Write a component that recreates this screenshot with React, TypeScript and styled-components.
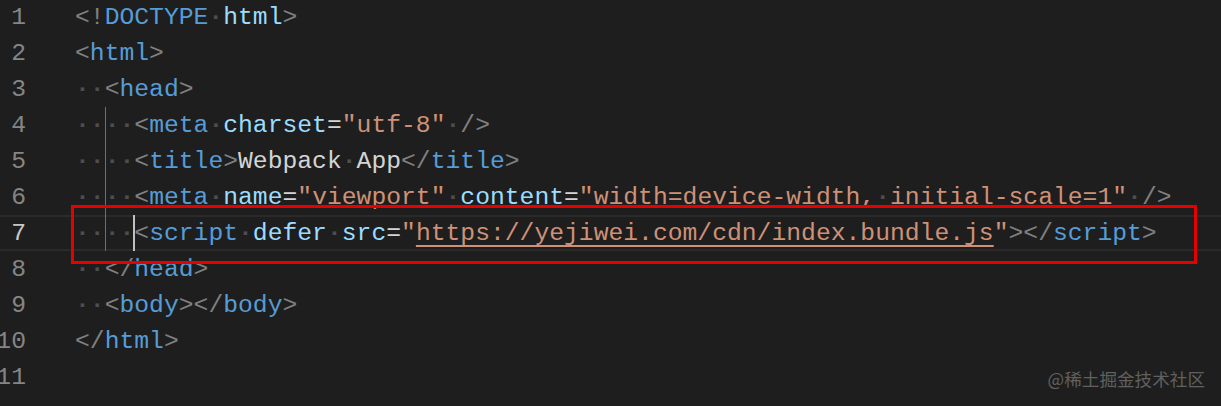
import React from "react";
import styled, { createGlobalStyle } from "styled-components";

const Global = createGlobalStyle`
  html, body { margin: 0; padding: 0; background: #1e1e1e; overflow: hidden; }
  #root { width: 1221px; height: 406px; }
`;

type Kind = "punc" | "tag" | "attr" | "str" | "text" | "link";
type Tok = [Kind, string];

const colors: Record<Kind, string> = {
  punc: "#808080",
  tag: "#569cd6",
  attr: "#9cdcfe",
  str: "#ce9178",
  text: "#d4d4d4",
  link: "#ce9178",
};

const Page = styled.div`
  position: relative;
  width: 1221px;
  height: 406px;
  background: #1e1e1e;
  overflow: hidden;
  font-family: "Liberation Mono", "DejaVu Sans Mono", monospace;
  font-size: 24.7px;
`;

const Editor = styled.div`
  display: flex;
  flex-direction: column;
  margin-top: -1px;
`;

const Row = styled.div<{ $current?: boolean }>`
  display: flex;
  height: 36px;
  line-height: 36px;
  white-space: pre;
  box-shadow: ${(p) =>
    p.$current ? "inset 0 2px 0 #2a2a2a, inset 0 -2px 0 #2a2a2a" : "none"};
`;

const Num = styled.div<{ $current?: boolean }>`
  width: 26px;
  flex: none;
  text-align: right;
  direction: rtl;
  color: ${(p) => (p.$current ? "#c6c6c6" : "#858585")};
`;

const Code = styled.div`
  margin-left: 49px;
`;

const Span = styled.span<{ $kind: Kind }>`
  color: ${(p) => colors[p.$kind]};
  text-decoration: ${(p) => (p.$kind === "link" ? "underline" : "none")};
  text-underline-offset: 5px;
  text-decoration-thickness: 2px;
`;

const Dot = styled.span`
  color: #4e4e4e;
  font-weight: bold;
`;

const Guide = styled.span`
  display: inline-block;
  width: 0;
  height: 36px;
  vertical-align: top;
  border-left: 1px solid #6e6e6e;
  margin-right: -1px;
`;

const Cursor = styled.span`
  display: inline-block;
  width: 0;
  height: 36px;
  vertical-align: top;
  border-left: 2px solid #c0c0c0;
  margin-left: -1px;
  margin-right: -1px;
`;

const Highlight = styled.div`
  position: absolute;
  left: 71px;
  top: 205px;
  width: 1126px;
  height: 59px;
  box-sizing: border-box;
  border: 3px solid #e60000;
  pointer-events: none;
`;

const Watermark = styled.div`
  position: absolute;
  right: 16px;
  bottom: 15px;
  font-family: "Noto Sans CJK SC", "Noto Sans", sans-serif;
  font-size: 17.6px;
  color: #606060;
`;

interface Line {
  indent: number;
  guide?: boolean;
  cursor?: boolean;
  toks: Tok[];
}

const lines: Line[] = [
  { indent: 0, toks: [["punc", "<!"], ["tag", "DOCTYPE"], ["text", " "], ["attr", "html"], ["punc", ">"]] },
  { indent: 0, toks: [["punc", "<"], ["tag", "html"], ["punc", ">"]] },
  { indent: 2, toks: [["punc", "<"], ["tag", "head"], ["punc", ">"]] },
  {
    indent: 4,
    guide: true,
    toks: [["punc", "<"], ["tag", "meta"], ["text", " "], ["attr", "charset"], ["text", "="], ["str", "\"utf-8\""], ["text", " "], ["punc", "/>"]],
  },
  {
    indent: 4,
    guide: true,
    toks: [["punc", "<"], ["tag", "title"], ["punc", ">"], ["text", "Webpack App"], ["punc", "</"], ["tag", "title"], ["punc", ">"]],
  },
  {
    indent: 4,
    guide: true,
    toks: [
      ["punc", "<"], ["tag", "meta"], ["text", " "], ["attr", "name"], ["text", "="], ["str", "\"viewport\""], ["text", " "],
      ["attr", "content"], ["text", "="], ["str", "\"width=device-width, initial-scale=1\""], ["text", " "], ["punc", "/>"],
    ],
  },
  {
    indent: 4,
    guide: true,
    cursor: true,
    toks: [
      ["punc", "<"], ["tag", "script"], ["text", " "], ["attr", "defer"], ["text", " "], ["attr", "src"], ["text", "="],
      ["str", "\""], ["link", "https://yejiwei.com/cdn/index.bundle.js"], ["str", "\""], ["punc", "></"], ["tag", "script"], ["punc", ">"],
    ],
  },
  { indent: 2, toks: [["punc", "</"], ["tag", "head"], ["punc", ">"]] },
  { indent: 2, toks: [["punc", "<"], ["tag", "body"], ["punc", "></"], ["tag", "body"], ["punc", ">"]] },
  { indent: 0, toks: [["punc", "</"], ["tag", "html"], ["punc", ">"]] },
  { indent: 0, toks: [] },
];

function renderText(kind: Kind, text: string, key: number) {
  const parts = text.split(" ");
  return (
    <Span key={key} $kind={kind}>
      {parts.map((p, i) => (
        <React.Fragment key={i}>
          {i > 0 && <Dot>·</Dot>}
          {p}
        </React.Fragment>
      ))}
    </Span>
  );
}

export default function App() {
  return (
    <Page>
      <Global />
      <Editor>
        {lines.map((line, i) => {
          const current = i === 6;
          return (
            <Row key={i} $current={current}>
              <Num $current={current}>{i + 1}</Num>
              <Code>
                {Array.from({ length: line.indent }).map((_, c) => (
                  <React.Fragment key={c}>
                    {line.guide && c === 2 && <Guide />}
                    <Dot>·</Dot>
                  </React.Fragment>
                ))}
                {line.cursor && <Cursor />}
                {line.toks.map(([k, t], j) => renderText(k, t, j))}
              </Code>
            </Row>
          );
        })}
      </Editor>
      <Highlight />
      <Watermark>@稀土掘金技术社区</Watermark>
    </Page>
  );
}
